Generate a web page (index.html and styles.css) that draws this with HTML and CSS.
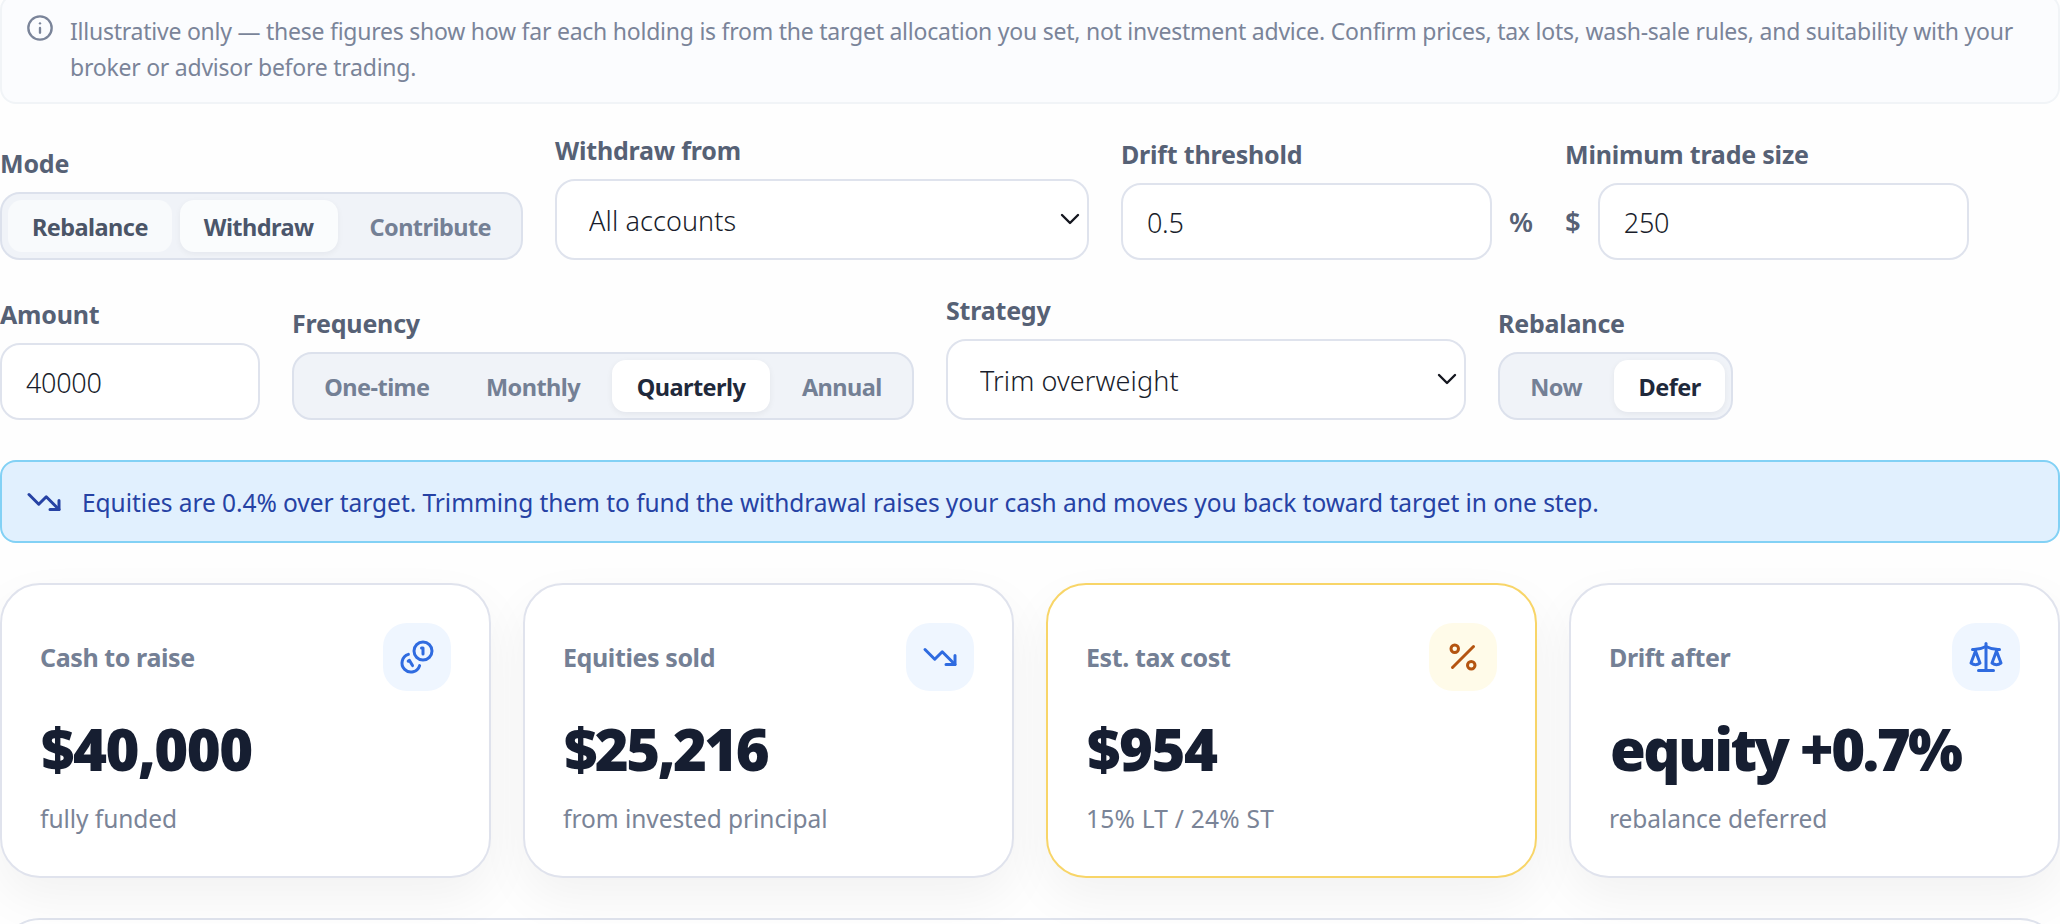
FILE: index.html
```html
<!DOCTYPE html>
<html lang="en">
<head>
  <meta charset="UTF-8" />
  <meta name="viewport" content="width=device-width, initial-scale=1.0"/>
  <title>Rebalance planner</title>
  <link rel="stylesheet" href="styles.css">
</head>
<body>

  <main class="planner">
    <div class="notice">
      <svg class="notice-icon" viewBox="0 0 24 24"><circle cx="12" cy="12" r="10"/><path d="M12 16v-4"/><path d="M12 8h.01"/></svg>
      <p>Illustrative only — these figures show how far each holding is from the target allocation you set, not investment advice. Confirm prices, tax lots, wash-sale rules, and suitability with your<br>broker or advisor before trading.</p>
    </div>

    <div class="controls">
      <div class="field">
        <span class="label">Mode</span>
        <div class="segmented mode">
          <button class="leaving">Rebalance</button>
          <button class="entering">Withdraw</button>
          <button>Contribute</button>
        </div>
      </div>
      <div class="field">
        <label class="label" for="account">Withdraw from</label>
        <div class="select account">
          <select id="account"><option>All accounts</option></select>
          <svg class="chevron" viewBox="0 0 20 12"><path d="M2 2l8 8 8-8"/></svg>
        </div>
      </div>
      <div class="field">
        <label class="label" for="drift">Drift threshold</label>
        <div class="affix">
          <input id="drift" type="text" value="0.5">
          <span>%</span>
        </div>
      </div>
      <div class="field">
        <label class="label" for="min-trade">Minimum trade size</label>
        <div class="affix">
          <span>$</span>
          <input id="min-trade" type="text" value="250">
        </div>
      </div>
    </div>

    <div class="controls">
      <div class="field">
        <label class="label" for="amount">Amount</label>
        <input id="amount" class="amount" type="text" value="40000">
      </div>
      <div class="field">
        <span class="label">Frequency</span>
        <div class="segmented frequency">
          <button>One-time</button>
          <button>Monthly</button>
          <button class="active">Quarterly</button>
          <button>Annual</button>
        </div>
      </div>
      <div class="field">
        <label class="label" for="strategy">Strategy</label>
        <div class="select strategy">
          <select id="strategy"><option>Trim overweight</option></select>
          <svg class="chevron" viewBox="0 0 20 12"><path d="M2 2l8 8 8-8"/></svg>
        </div>
      </div>
      <div class="field">
        <span class="label">Rebalance</span>
        <div class="segmented timing">
          <button>Now</button>
          <button class="active">Defer</button>
        </div>
      </div>
    </div>

    <div class="banner">
      <svg class="icon" viewBox="0 0 24 24"><path d="M16 17h6v-6"/><path d="m22 17-8.5-8.5-5 5L2 7"/></svg>
      <span>Equities are 0.4% over target. Trimming them to fund the withdrawal raises your cash and moves you back toward target in one step.</span>
    </div>

    <div class="cards">
      <div class="card">
        <div class="card-head">
          <h3>Cash to raise</h3>
          <div class="tile">
            <svg class="icon" viewBox="0 0 24 24"><path d="M13.744 17.736a6 6 0 1 1-7.48-7.48"/><path d="M15 6h1v4"/><path d="m6.134 14.768.866-.5 2 3.464"/><circle cx="16" cy="8" r="6"/></svg>
          </div>
        </div>
        <div class="value">$40,000</div>
        <div class="hint">fully funded</div>
      </div>
      <div class="card">
        <div class="card-head">
          <h3>Equities sold</h3>
          <div class="tile">
            <svg class="icon" viewBox="0 0 24 24"><path d="M16 17h6v-6"/><path d="m22 17-8.5-8.5-5 5L2 7"/></svg>
          </div>
        </div>
        <div class="value tight">$25,216</div>
        <div class="hint">from invested principal</div>
      </div>
      <div class="card warn">
        <div class="card-head">
          <h3>Est. tax cost</h3>
          <div class="tile">
            <svg class="icon" viewBox="0 0 24 24"><path d="M19 5L5 19"/><circle cx="6.5" cy="6.5" r="2.5"/><circle cx="17.5" cy="17.5" r="2.5"/></svg>
          </div>
        </div>
        <div class="value">$954</div>
        <div class="hint rates">15% LT / 24% ST</div>
      </div>
      <div class="card">
        <div class="card-head">
          <h3>Drift after</h3>
          <div class="tile">
            <svg class="icon" viewBox="0 0 24 24"><path d="M12 3v18"/><path d="m19 8 3 8a5 5 0 0 1-6 0zV7"/><path d="M3 7h1a17 17 0 0 0 8-2 17 17 0 0 0 8 2h1"/><path d="m5 8 3 8a5 5 0 0 1-6 0zV7"/><path d="M7 21h10"/></svg>
          </div>
        </div>
        <div class="value tight">equity +0.7%</div>
        <div class="hint">rebalance deferred</div>
      </div>
    </div>

    <div class="panel"></div>
  </main>

</body>
</html>
```
FILE: styles.css
```css
* {
  box-sizing: border-box;
}

body {
  margin: 0;
  background-color: #fefefe;
  font-family: "Noto Sans", "Open Sans", sans-serif;
  overflow: hidden;
}

button,
input,
select {
  font-family: inherit;
}

svg {
  display: block;
  flex-shrink: 0;
  fill: none;
  stroke: currentColor;
  stroke-width: 2;
  stroke-linecap: round;
  stroke-linejoin: round;
}

.planner {
  height: 100vh;
  overflow: hidden;
}


.notice {
  display: flex;
  gap: 16px;
  height: 110px;
  margin-top: -6px;
  padding: 17px 24px;
  border: 2px solid #f1f4f7;
  border-radius: 16px;
  background: #fbfcfe;
  color: #7a8499;
  font-size: 23px;
  line-height: 36px;
  letter-spacing: -0.24px;
  white-space: nowrap;
}

.notice p {
  margin: 0;
}

.notice-icon {
  width: 28px;
  height: 28px;
  margin-top: 1px;
}


.controls {
  display: flex;
  align-items: flex-end;
  gap: 32px;
  height: 120px;
  margin-top: 36px;
}

.controls + .controls {
  margin-top: 40px;
}

.label {
  display: block;
  margin-bottom: 13px;
  color: #566175;
  font-size: 25px;
  font-weight: 700;
  line-height: 32px;
  letter-spacing: -0.2px;
}

.segmented {
  display: flex;
  gap: 8px;
  height: 68px;
  padding: 6px;
  border: 2px solid #dce1ec;
  border-radius: 20px;
  background: #f0f3f8;
}

.segmented button {
  flex: auto;
  padding: 1px 0 0;
  border: 0;
  border-radius: 14px;
  background: none;
  color: #748095;
  font-size: 23.5px;
  font-weight: 700;
  letter-spacing: -0.55px;
}

.segmented .active {
  background: #fff;
  color: #1f293b;
  box-shadow: 0 2px 6px rgba(15, 23, 42, 0.06);
}

.segmented .leaving {
  background: #f8fafc;
  color: #4b5567;
}

.segmented .entering {
  background: #fafcfd;
  color: #4b566b;
  box-shadow: 0 2px 6px rgba(15, 23, 42, 0.05);
}

.mode {
  width: 523px;
}

.frequency {
  width: 622px;
}

.timing {
  width: 235px;
}

input,
select {
  display: block;
  border: 2px solid #dfe3ed;
  border-radius: 20px;
  background: #fff;
  color: #191d2b;
  font-size: 27px;
  font-weight: 300;
  letter-spacing: -0.3px;
}

input {
  width: 371px;
  height: 77px;
  padding: 2px 24px 0;
}

.amount {
  width: 260px;
}

.select {
  position: relative;
}

select {
  width: 100%;
  height: 81px;
  padding: 2px 32px 0;
  letter-spacing: 0.1px;
  appearance: none;
}

.account {
  width: 534px;
}

.strategy {
  width: 520px;
}

.chevron {
  position: absolute;
  top: 34px;
  right: 9px;
  width: 20px;
  height: 12px;
  color: #14161f;
  stroke-width: 2.4;
}

.affix {
  display: flex;
  align-items: center;
  gap: 17px;
  color: #566175;
  font-size: 27.5px;
  font-weight: 600;
}


.banner {
  display: flex;
  align-items: center;
  gap: 20px;
  height: 83px;
  margin-top: 40px;
  padding: 1px 24px 0;
  border: 2px solid #82d1f5;
  border-radius: 16px;
  background: #e1f0fe;
  color: #2642a4;
  font-size: 24.5px;
  letter-spacing: -0.06px;
  white-space: nowrap;
}

.icon {
  width: 36px;
  height: 36px;
}


.cards {
  display: grid;
  grid-template-columns: repeat(4, 1fr);
  gap: 32px;
  margin-top: 40px;
}

.card {
  height: 295px;
  padding: 38px;
  border: 2px solid #e0e3ed;
  border-radius: 40px;
  background: #fff;
  box-shadow: 0 20px 50px rgba(0, 0, 0, 0.05);
}

.card-head {
  display: flex;
  align-items: center;
  justify-content: space-between;
}

.card h3 {
  margin: 0;
  color: #748095;
  font-size: 25px;
  font-weight: 700;
  letter-spacing: -0.4px;
}

.tile {
  display: flex;
  align-items: center;
  justify-content: center;
  width: 68px;
  height: 68px;
  border-radius: 24px;
  background: #eff6ff;
  color: #2f6be0;
}

.value {
  margin-top: 23px;
  padding-left: 1px;
  color: #161e31;
  font-size: 58px;
  font-weight: 900;
  line-height: 70px;
  letter-spacing: -1.5px;
  white-space: nowrap;
}

.value.tight {
  letter-spacing: -2.6px;
}

.hint {
  margin-top: 16px;
  color: #7a8497;
  font-size: 24.5px;
  line-height: 38px;
  letter-spacing: -0.05px;
}

.hint.rates {
  letter-spacing: 0.25px;
}

.warn {
  border-color: #f8d568;
}

.warn .tile {
  background: #fffbe9;
  color: #b45410;
}


.panel {
  height: 200px;
  margin-top: 40px;
  border: 2px solid #dfe3ed;
  border-radius: 40px;
  background: #fff;
}
```
